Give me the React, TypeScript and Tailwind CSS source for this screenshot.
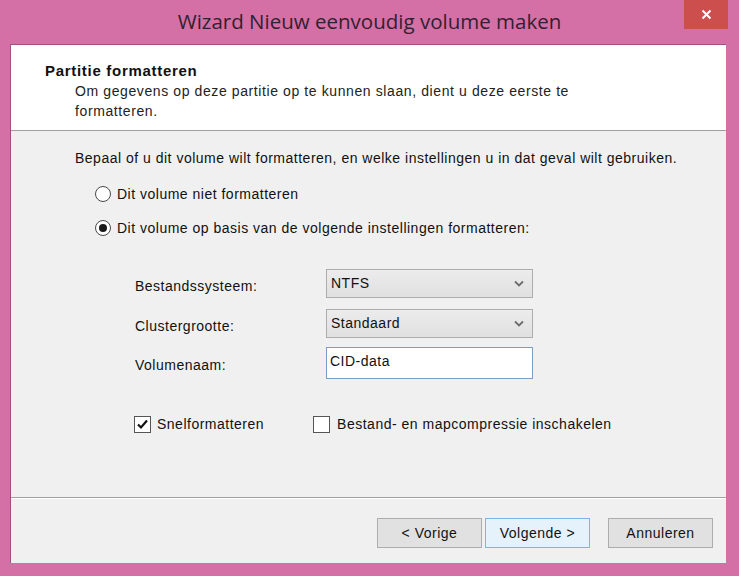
import React from "react";

function Radio({ checked }: { checked?: boolean }) {
  return (
    <span className="w-[16px] h-[16px] rounded-full border border-[#4a4a4a] bg-white flex items-center justify-center shrink-0">
      {checked && <span className="w-[8px] h-[8px] rounded-full bg-[#1a1a1a]" />}
    </span>
  );
}

function Checkbox({ checked }: { checked?: boolean }) {
  return (
    <span className="w-[17px] h-[17px] border border-[#555] bg-white flex items-center justify-center shrink-0">
      {checked && (
        <svg width="13" height="13" viewBox="0 0 13 13">
          <path d="M2 6.5 L5 9.5 L11 2.5" fill="none" stroke="#111" strokeWidth="2.2" />
        </svg>
      )}
    </span>
  );
}

function Combo({ value }: { value: string }) {
  return (
    <div className="w-[207px] h-[29px] border border-[#adadad] bg-gradient-to-b from-[#ececec] to-[#e0e0e0] flex items-center justify-between pl-[4px] pr-[8px]">
      <span>{value}</span>
      <svg width="10" height="7" viewBox="0 0 10 7">
        <path d="M1 1.5 L5 5.5 L9 1.5" fill="none" stroke="#6d6d6d" strokeWidth="1.8" />
      </svg>
    </div>
  );
}

function Button({ label, primary }: { label: string; primary?: boolean }) {
  return (
    <div
      className={
        primary
          ? "w-[105px] h-[30px] border border-[#7eb4ea] bg-[#e5f1fb] flex items-center justify-center"
          : "w-[105px] h-[30px] border border-[#adadad] bg-[#e1e1e1] flex items-center justify-center"
      }
    >
      {label}
    </div>
  );
}

export default function App() {
  return (
    <div
      className="w-[739px] h-[576px] bg-[#d470a6] flex flex-col text-[14px] tracking-[0.5px] text-[#111] overflow-hidden"
      style={{ fontFamily: '"Liberation Sans", Arial, sans-serif' }}
    >
      <div className="h-[44px] relative flex items-center justify-center shrink-0">
        <span
          className="text-[20.5px] tracking-normal text-[#33202f] pb-[1px]"
          style={{ fontFamily: '"Open Sans", "Noto Sans", sans-serif' }}
        >
          Wizard Nieuw eenvoudig volume maken
        </span>
        <div className="absolute top-0 right-[11px] w-[44px] h-[29px] bg-[#cc4f4d] flex items-center justify-center">
          <svg width="11" height="11" viewBox="0 0 11 11">
            <path d="M1.5 1.5 L9.5 9.5 M9.5 1.5 L1.5 9.5" stroke="#fff" strokeWidth="2" />
          </svg>
        </div>
      </div>
      <div className="flex-1 ml-[10px] mr-[13px] mb-[13px] flex flex-col border-l border-t border-[#a35080] bg-[#f0f0f0]">
        <div className="h-[86px] bg-white border-b border-[#a0a0a0] pl-[34px] pt-[17px] shrink-0">
          <div className="font-bold text-[15px] tracking-[0.7px] leading-[18px]">Partitie formatteren</div>
          <div className="pl-[30px] mt-[1px] leading-[20px] tracking-[0.6px] text-[#222]">
            Om gegevens op deze partitie op te kunnen slaan, dient u deze eerste te
            <br />
            formatteren.
          </div>
        </div>
        <div className="flex-1 pl-[64px] pt-[18px] flex flex-col">
          <div className="leading-[18px]">
            Bepaal of u dit volume wilt formatteren, en welke instellingen u in dat geval wilt gebruiken.
          </div>
          <div className="mt-[17px] pl-[20px] flex items-center gap-[6px] h-[20px]">
            <Radio />
            <span>Dit volume niet formatteren</span>
          </div>
          <div className="mt-[14px] pl-[20px] flex items-center gap-[6px] h-[20px]">
            <Radio checked />
            <span>Dit volume op basis van de volgende instellingen formatteren:</span>
          </div>
          <div className="mt-[31px] pl-[60px] grid grid-cols-[191px_207px] gap-y-[11px] items-center">
            <span className="pt-[6px]">Bestandssysteem:</span>
            <Combo value="NTFS" />
            <span className="pt-[5px]">Clustergrootte:</span>
            <Combo value="Standaard" />
            <span className="pt-[3px]">Volumenaam:</span>
            <div className="h-[32px] -mt-[2px] border border-[#7a9cc5] bg-white flex items-center pl-[3px] pb-[4px]">
              CID-data
            </div>
          </div>
          <div className="mt-[36px] pl-[59px] flex items-center h-[18px]">
            <Checkbox checked />
            <span className="ml-[6px]">Snelformatteren</span>
            <span className="ml-[49px]">
              <Checkbox />
            </span>
            <span className="ml-[7px]">Bestand- en mapcompressie inschakelen</span>
          </div>
        </div>
        <div className="h-[66px] border-t border-[#a0a0a0] shadow-[inset_0_1px_0_#fff] flex justify-end items-start pt-[20px] pr-[13px] shrink-0">
          <Button label="< Vorige" />
          <span className="ml-[3px]">
            <Button label="Volgende >" primary />
          </span>
          <span className="ml-[18px]">
            <Button label="Annuleren" />
          </span>
        </div>
      </div>
    </div>
  );
}
